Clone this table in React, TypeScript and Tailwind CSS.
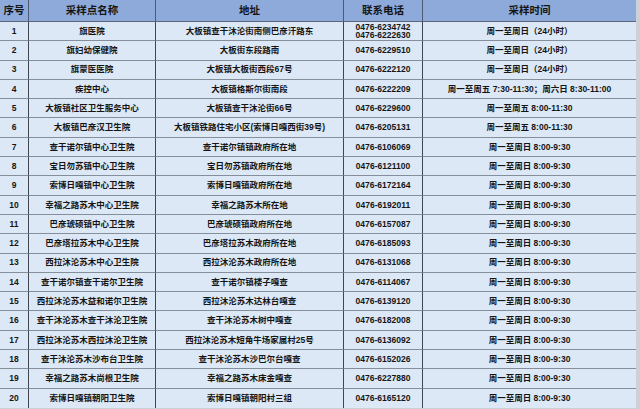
import React from "react";

type Row = [string, string, string, string[], string];

const T24 = "周一至周日（24小时）";
const T5 = "周一至周五 8:00-11:30";
const T7 = "周一至周日 8:00-9:30";

const rows: Row[] = [
  ["1", "旗医院", "大板镇查干沐沦街南侧巴彦汗路东", ["0476-6234742", "0476-6222630"], T24],
  ["2", "旗妇幼保健院", "大板街东段路南", ["0476-6229510"], T24],
  ["3", "旗蒙医医院", "大板镇大板街西段67号", ["0476-6222120"], T24],
  ["4", "疾控中心", "大板镇格斯尔街南段", ["0476-6222209"], "周一至周五 7:30-11:30；周六日 8:30-11:00"],
  ["5", "大板镇社区卫生服务中心", "大板镇查干沐沦街66号", ["0476-6229600"], T5],
  ["6", "大板镇巴彦汉卫生院", "大板镇铁路住宅小区(索博日嘎西街39号)", ["0476-6205131"], T5],
  ["7", "查干诺尔镇中心卫生院", "查干诺尔镇镇政府所在地", ["0476-6106069"], T7],
  ["8", "宝日勿苏镇中心卫生院", "宝日勿苏镇政府所在地", ["0476-6121100"], T7],
  ["9", "索博日嘎镇中心卫生院", "索博日嘎镇政府所在地", ["0476-6172164"], T7],
  ["10", "幸福之路苏木中心卫生院", "幸福之路苏木所在地", ["0476-6192011"], T7],
  ["11", "巴彦琥硕镇中心卫生院", "巴彦琥硕镇政府所在地", ["0476-6157087"], T7],
  ["12", "巴彦塔拉苏木中心卫生院", "巴彦塔拉苏木政府所在地", ["0476-6185093"], T7],
  ["13", "西拉沐沦苏木中心卫生院", "西拉沐沦苏木政府所在地", ["0476-6131068"], T7],
  ["14", "查干诺尔镇查干诺尔卫生院", "查干诺尔镇楼子嘎查", ["0476-6114067"], T7],
  ["15", "西拉沐沦苏木益和诺尔卫生院", "西拉沐沦苏木达林台嘎查", ["0476-6139120"], T7],
  ["16", "查干沐沦苏木查干沐沦卫生院", "查干沐沦苏木树中嘎查", ["0476-6182008"], T7],
  ["17", "西拉沐沦苏木西拉沐沦卫生院", "西拉沐沦苏木短角牛场家属村25号", ["0476-6136092"], T7],
  ["18", "查干沐沦苏木沙布台卫生院", "查干沐沦苏木沙巴尔台嘎查", ["0476-6152026"], T7],
  ["19", "幸福之路苏木尚根卫生院", "幸福之路苏木床金嘎查", ["0476-6227880"], T7],
  ["20", "索博日嘎镇朝阳卫生院", "索博日嘎镇朝阳村三组", ["0476-6165120"], T7],
];

const headers = ["序号", "采样点名称", "地址", "联系电话", "采样时间"];

export default function App() {
  return (
    <div
      className="w-[640px] h-[409px] bg-[#cdd1d7] overflow-hidden"
      style={{ fontFamily: '"Liberation Sans", Arial, "Noto Sans CJK SC", sans-serif' }}
    >
      <div className="grid w-[636px] grid-cols-[29px_127px_188px_79px_213px] grid-rows-[22px_repeat(20,19.3px)] bg-[#dce8f5] text-[#151515] font-bold">
        {headers.map((h, i) => (
          <div
            key={h}
            className={`flex items-center justify-center bg-[#8eaadb] text-[10.5px] border-b border-b-[#5d6676] ${
              i < 4 ? "border-r border-r-[#4d5a73]" : ""
            }`}
          >
            {h}
          </div>
        ))}
        {rows.map((r, ri) => {
          const last = ri === rows.length - 1;
          const cellBase = `flex items-center justify-center text-[8.5px] leading-none whitespace-nowrap ${
            last ? "" : "border-b border-b-[#858e9b]"
          }`;
          return (
            <React.Fragment key={r[0]}>
              <div className={`${cellBase} border-r border-r-[#3f4652]`}>{r[0]}</div>
              <div className={`${cellBase} border-r border-r-[#3f4652]`}>{r[1]}</div>
              <div className={`${cellBase} border-r border-r-[#3f4652]`}>{r[2]}</div>
              <div className={`${cellBase} flex-col border-r border-r-[#3f4652] leading-[9px]`}>
                {r[3].map((p) => (
                  <span key={p}>{p}</span>
                ))}
              </div>
              <div className={cellBase}>{r[4]}</div>
            </React.Fragment>
          );
        })}
      </div>
    </div>
  );
}
